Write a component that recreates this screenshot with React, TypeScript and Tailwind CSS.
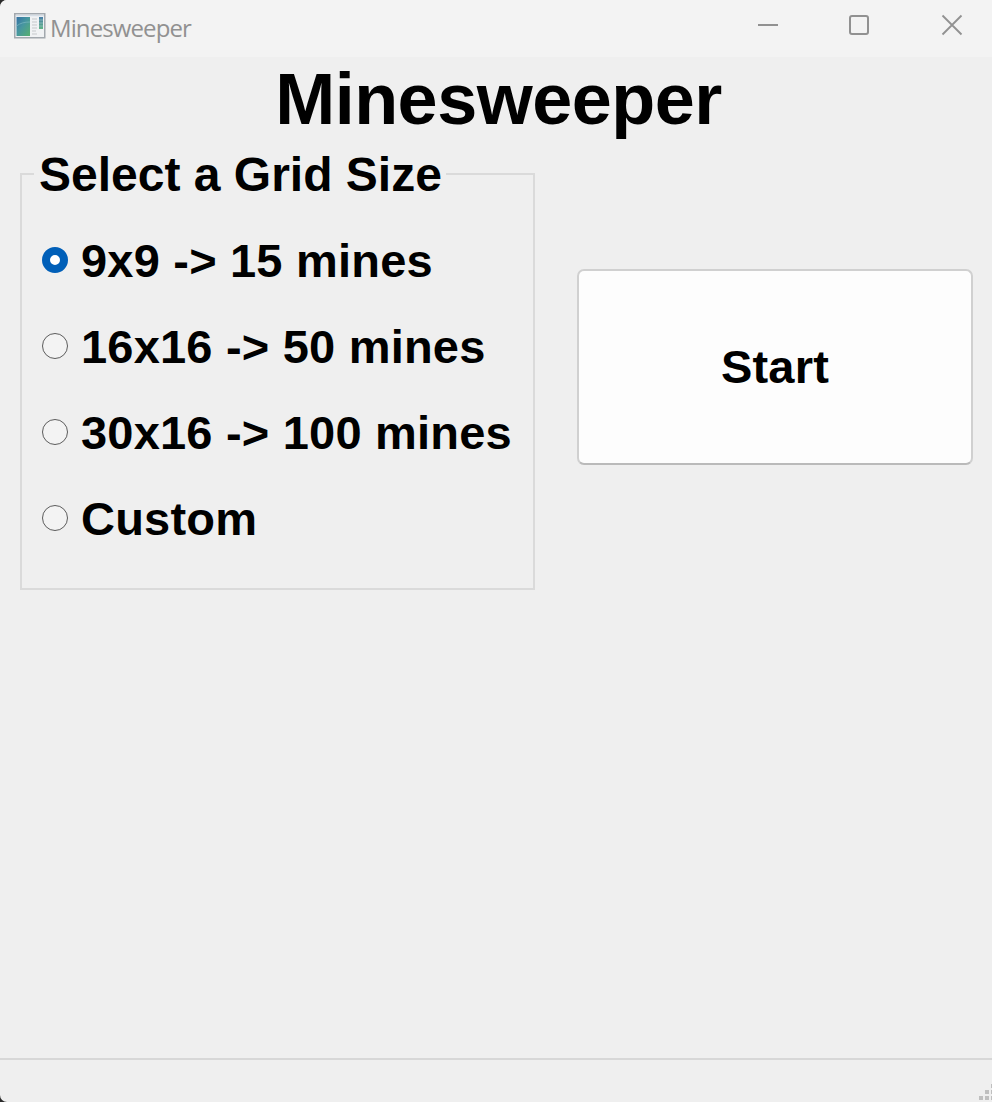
import { useState } from "react";

const options = ["9x9 -> 15 mines", "16x16 -> 50 mines", "30x16 -> 100 mines", "Custom"];

function AppIcon() {
  return (
    <svg width="32" height="26" viewBox="0 0 32 26" className="shrink-0">
      <defs>
        <linearGradient id="pane" x1="0" y1="0" x2="1" y2="1">
          <stop offset="0" stopColor="#3470a4" />
          <stop offset="0.45" stopColor="#4796a0" />
          <stop offset="1" stopColor="#58b070" />
        </linearGradient>
        <linearGradient id="bar" x1="0" y1="0" x2="0" y2="1">
          <stop offset="0" stopColor="#4a7fa8" />
          <stop offset="1" stopColor="#5fb585" />
        </linearGradient>
      </defs>
      <rect x="0.75" y="0.75" width="30" height="24" fill="#f0f2f4" stroke="#a2a8ae" strokeWidth="1.5" />
      <path d="M2 2.5h28" stroke="#d5dde5" strokeWidth="1.5" />
      <rect x="2.5" y="4" width="13.5" height="19" fill="url(#pane)" />
      <path d="M2.5 13c4-3 8-4 13.5-4" stroke="#75b2bd" strokeWidth="0.8" fill="none" />
      <path d="M18 6h5M18 9h5M18 12h5M18 15h5M18 18h4M18 21h5" stroke="#c5c8cb" strokeWidth="1" />
      <rect x="25" y="4" width="4" height="12" fill="url(#bar)" />
      <path d="M25 7h4M25 10h4M25 13h4" stroke="#9bc3c5" strokeWidth="0.7" />
    </svg>
  );
}

function TitleBar() {
  return (
    <header className="flex h-[57px] shrink-0 items-start bg-[#f3f3f3] pl-[14px] font-normal">
      <div className="flex pt-[13px]">
        <AppIcon />
        <span className="ml-[4px] font-['Open_Sans',sans-serif] text-[24px] leading-[29px] tracking-[-0.9px] text-[#919191]">
          Minesweeper
        </span>
      </div>
      <div className="ml-auto flex pt-[14px] text-[#919191]">
        <button aria-label="Minimize" className="mr-[69px]">
          <svg width="22" height="22" viewBox="0 0 22 22" fill="none" stroke="currentColor" strokeWidth="2">
            <path d="M1 11h20" />
          </svg>
        </button>
        <button aria-label="Maximize" className="mr-[71px]">
          <svg width="22" height="22" viewBox="0 0 22 22" fill="none" stroke="currentColor" strokeWidth="2">
            <rect x="2" y="2" width="18" height="18" rx="2" />
          </svg>
        </button>
        <button aria-label="Close" className="mr-[29px]">
          <svg width="22" height="22" viewBox="0 0 22 22" fill="none" stroke="currentColor" strokeWidth="1.8">
            <path d="M1.5 1.5l19 19M20.5 1.5l-19 19" />
          </svg>
        </button>
      </div>
    </header>
  );
}

export default function App() {
  const [selected, setSelected] = useState(0);
  return (
    <div className="h-[1102px] w-[992px] overflow-hidden bg-[#2b2b2b] font-['Liberation_Sans',Arial,sans-serif] font-bold text-black">
      <div className="flex h-full flex-col overflow-hidden rounded-l-[7px] bg-[#efefef]">
        <TitleBar />
        <main className="flex flex-1 flex-col">
          <h1 className="mb-[3px] -mt-px pl-[5px] text-center text-[72px] leading-[86px] tracking-[-0.5px]">
            Minesweeper
          </h1>
          <div className="flex items-start pl-[20px]">
            <fieldset className="flex h-[445px] w-[515px] flex-col border-2 border-[#dadada] pl-[20px]">
              <legend className="-ml-[8px] h-[58px] pr-[4px] pl-[5px] text-[48px] leading-[60px]">
                Select a Grid Size
              </legend>
              <div className="flex flex-col gap-[28px] pt-[28px]">
                {options.map((label, i) => (
                  <label key={label} className="flex h-[58px] items-center">
                    <input
                      type="radio"
                      name="grid"
                      className="sr-only"
                      checked={selected === i}
                      onChange={() => setSelected(i)}
                    />
                    <span
                      className={
                        selected === i
                          ? "h-[26px] w-[26px] shrink-0 rounded-full border-8 border-[#005fb8] bg-white"
                          : "h-[26px] w-[26px] shrink-0 rounded-full border border-[#5c5c5c] bg-[#f3f3f3]"
                      }
                    />
                    <span className="ml-[13px] pt-[1px] text-[47px] leading-[58px] tracking-[0.2px] whitespace-nowrap">
                      {label}
                    </span>
                  </label>
                ))}
              </div>
            </fieldset>
            <button className="mt-[124px] ml-[42px] h-[196px] w-[396px] rounded-[7px] border-2 border-[#d0d0d0] border-b-[#bababa] bg-[#fdfdfd] text-[47px] tracking-[0.2px]">
              Start
            </button>
          </div>
        </main>
        <footer className="flex h-[44px] shrink-0 items-end justify-end border-t-2 border-[#d7d7d7]">
          <svg width="13" height="18" viewBox="0 0 13 18" fill="#bfbfbf">
            <path d="M0 12h4v4H0zM6 12h4v4H6zM12 12h1v4h-1zM6 6h4v4H6zM12 6h1v4h-1zM12 0h1v4h-1z" />
          </svg>
        </footer>
      </div>
    </div>
  );
}
